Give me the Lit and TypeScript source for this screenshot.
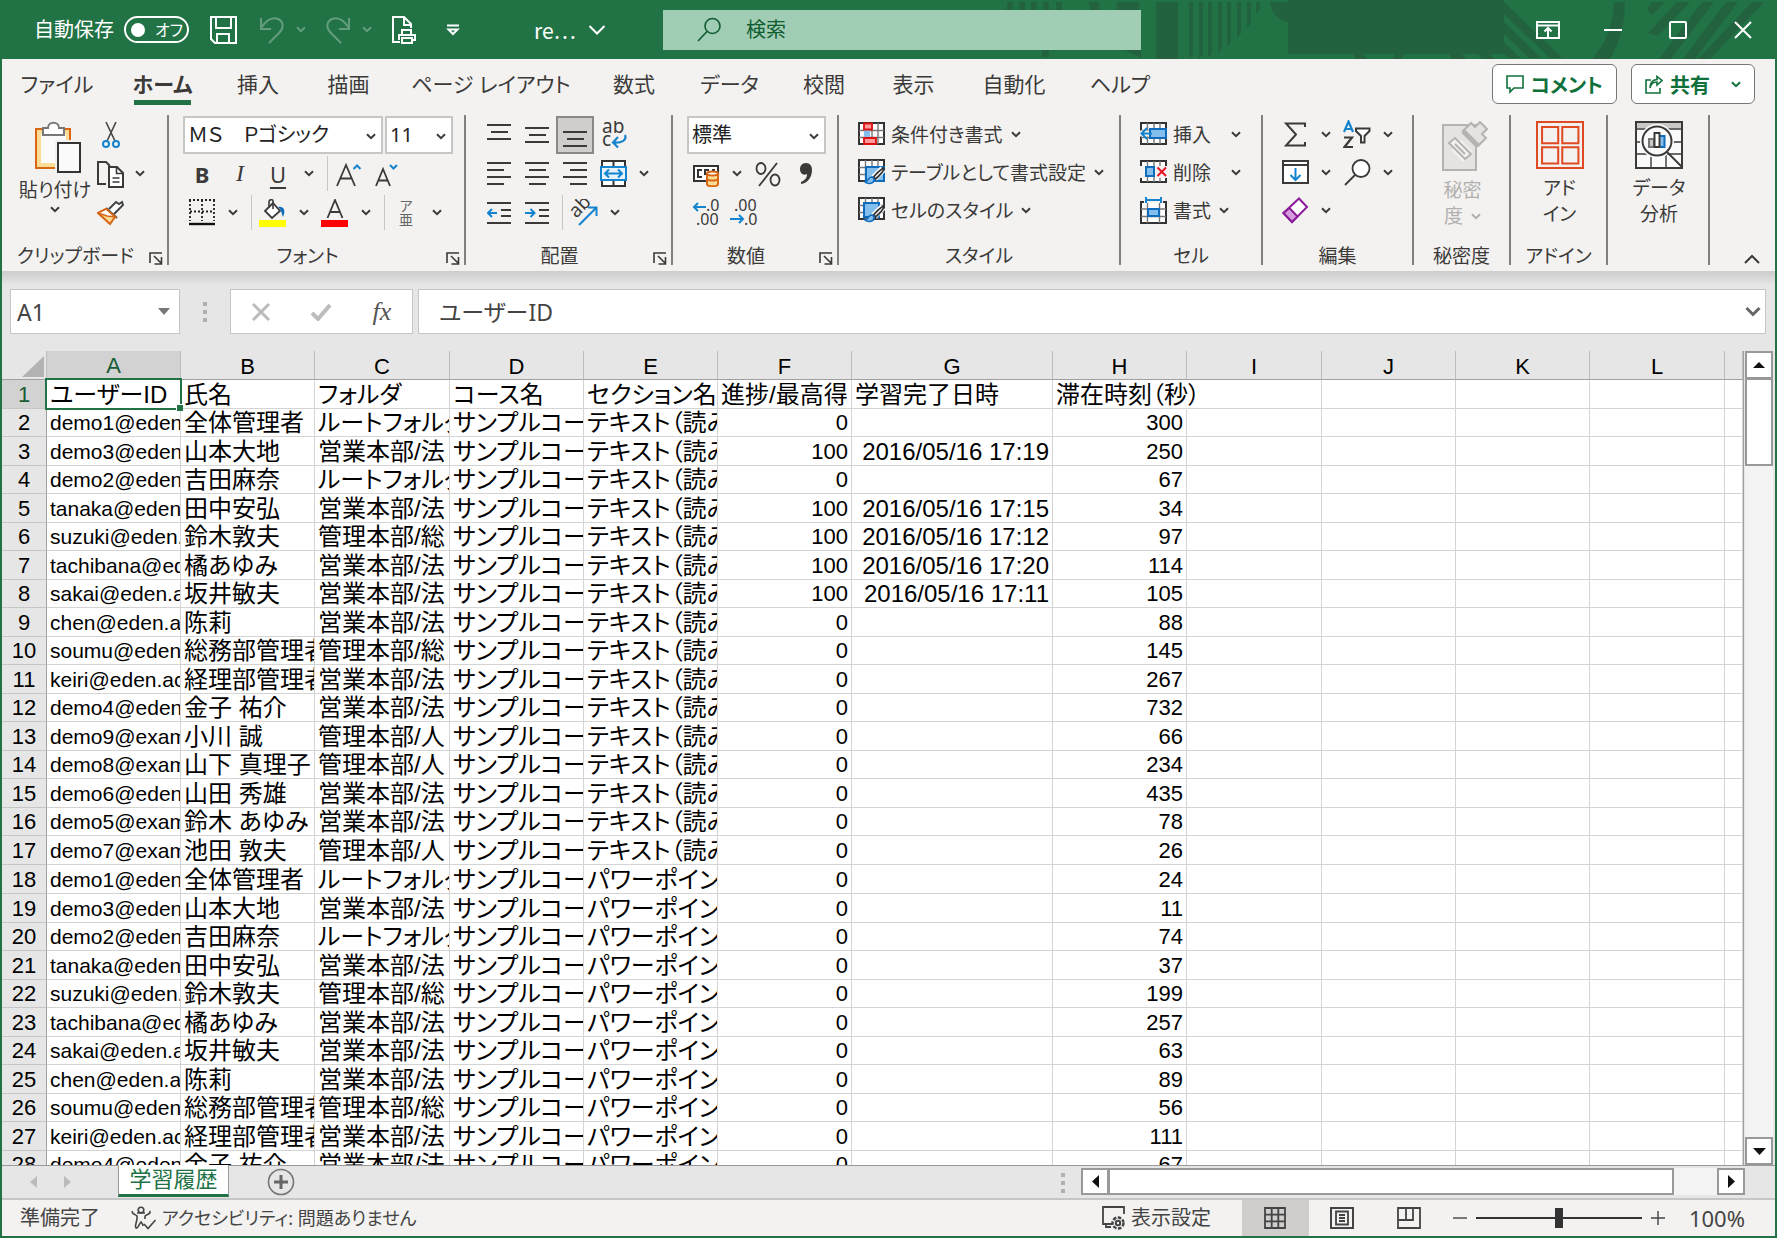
import { LitElement, html, css, svg, nothing, type TemplateResult, type SVGTemplateResult } from "lit";
import { customElement, state } from "lit/decorators.js";
import { classMap } from "lit/directives/class-map.js";

type Part = SVGTemplateResult;

const icon = (w: number, h: number, body: Part) => html`<svg
  width=${w} height=${h} viewBox="0 0 ${w} ${h}" fill="none" stroke="currentColor" stroke-width="2" aria-hidden="true"
>${body}</svg>`;

const chevron = icon(10, 7, svg`<path d="M1 1.2 5 5.2 9 1.2"/>`);
const lines = (rows: [number, number, number][]) =>
  icon(24, 24, svg`${rows.map(([x1, x2, y]) => svg`<path d="M${x1} ${y}H${x2}"/>`)}`);

const gridLines = svg`<path stroke="#777" stroke-width="1.4" d="M1 8.5H26M1 15.5H26M7.5 1V22M14 1V22M20 1V22"/>`;
const gridFrame = svg`<path fill="#fff" stroke="#333" d="M1 1H26V22H1Z"/>`;
const brush = svg`<path stroke="#fff" stroke-width="7" d="M25 10 16 19"/><path fill="#f3f2f1" stroke="#333" stroke-width="1.8" d="M25.500 9C22 11 18 15 15.500 18L17.500 20C21 17 25 13 26 10Z"/><path fill="#83beec" stroke="#0f6cbd" stroke-width="1.6" d="M7 23C10 23 10 18 14 18 17 19 17 24 12 24.500 10 24.600 8 24 7 23Z"/>`;

const I = {
  save: icon(28, 28, svg`<path d="M1 1H26V27H5L1 23ZM6 1V12H21V1M7 27V18H19V27"/>`),
  undo: icon(26, 28, svg`<path d="M2 2V13H12M2 12C8 3 14 1 19 3 25 6 25 12 20 17L10 27"/>`),
  redo: icon(26, 28, svg`<path d="M24 2V13H14M24 12C18 3 12 1 7 3 1 6 1 12 6 17L16 27"/>`),
  print: icon(26, 28, svg`<path d="M9 26H2V1H13L20 8V12M13 1V9H20M11 19V14H20V19M8 24V19H24V24H21M11 22H21V27H11Z"/>`),
  custom: icon(14, 12, svg`<path d="M1 1.500H13M2.500 5.500 7 10 11.500 5.500Z"/>`),
  bigChevron: icon(18, 12, svg`<path d="M1.500 2 9 9.500 16.500 2"/>`),
  search: icon(26, 26, svg`<circle cx="16.500" cy="9" r="7.500" stroke-width="1.600"/><path stroke-width="1.600" d="M11 14.500 2 24"/>`),
  ribbonOpt: icon(24, 18, svg`<path d="M1 1H23V17H1ZM1 4.500H23M12 16V7M8.500 10.500 12 7 15.500 10.500"/>`),
  min: icon(20, 18, svg`<path d="M1 9H19"/>`),
  max: icon(18, 18, svg`<rect x="1" y="1" width="16" height="16" rx="1"/>`),
  close: icon(18, 18, svg`<path d="M1 1 17 17M17 1 1 17"/>`),
  comment: icon(18, 19, svg`<path stroke-width="1.600" d="M1 1H17V13H8L4 17V13H1Z"/>`),
  share: icon(18, 19, svg`<path stroke-width="1.600" d="M6 5H1V18H15V13M5 13C6 8 9 7 12 7V10L17 5.500 12 1.500V4.500C7 5 5 8 5 13Z"/>`),
  paste: icon(56, 54, svg`<g transform="translate(6 0)"><path fill="#fbdc97" stroke="#d86613" d="M3 9H37V48H3Z"/><path fill="#fafafa" stroke="none" d="M8 14H33V43H8Z"/><path fill="#fff" stroke="#777" d="M10 15V8H15C15 1 26 1 26 8H31V15Z"/><path fill="#fff" stroke="#f3f2f1" stroke-width="6" d="M25 23H47V52H25Z"/><path fill="#fafafa" stroke="#333" d="M25 23H47V52H25Z"/></g>`),
  cut: icon(18, 28, svg`<path stroke="#444" stroke-width="1.600" d="M4 1 13 20M14 1 5 20"/><g stroke="#1583ce"><circle cx="4" cy="23" r="3"/><circle cx="14" cy="23" r="3"/></g>`),
  copy: icon(28, 28, svg`<path d="M9 24H1V2H9L13 6"/><path fill="#fff" d="M12 7H20L26 13V27H12Z"/><path stroke-width="1.600" d="M19.500 7V13.500H26M15.500 18H22.500M15.500 22H22.500"/>`),
  painter: icon(28, 26, svg`<path fill="#fff" stroke="#444" d="M12 9 19 2 22 4 25 2 26 5 17 14"/><path fill="#fff" stroke="#444" d="M9 8 20 18"/><path fill="#fbdc97" stroke="#d86613" d="M9 9 1 13 13 24 18 17Z"/><path fill="#fff" stroke="#d86613" stroke-width="1.600" d="M9 9 1 13 10 16 18 17Z"/>`),
  growFont: icon(28, 28, svg`<path stroke-width="1.800" d="M2 26 11 5 20 26M5 18.500H17"/><path stroke="#1583ce" d="M18.500 9 22 5.500 25.500 9"/>`),
  shrinkFont: icon(28, 28, svg`<path stroke-width="1.800" d="M3 26 10 9 17 26M5.500 20.500H14.500"/><path stroke="#1583ce" d="M17 5 20.500 8.500 24 5"/>`),
  borders: icon(26, 27, svg`<path stroke="#222" stroke-dasharray="2 2" stroke-width="1.800" d="M0 1H26M1 1V22M25 1V22M13 1V22M1 12.500H25"/><path stroke="#111" stroke-width="2.400" d="M0 25H26"/>`),
  fill: icon(28, 28, svg`<path fill="#fff" stroke-width="1.800" d="M6 12 14 4 21 12 13 19Z"/><path stroke-width="1.600" d="M14 10V2C14 0 10 0 10 3V8"/><path fill="#0f6cbd" stroke="none" d="M19 8C25 7 27 12 24 18 22 14 23 11 19 8Z"/><path fill="#ff0" stroke="none" d="M0 21H27V28H0Z"/>`),
  color: icon(28, 28, svg`<path stroke-width="1.800" d="M6.500 19 14 1 21.500 19M9 13H19"/><path fill="#f00" stroke="none" d="M0 21H27V28H0Z"/>`),
  top: lines([[0, 24, 2], [4, 21, 9], [0, 24, 16]]),
  middle: lines([[0, 24, 5], [4, 21, 12], [0, 24, 19]]),
  bottom: lines([[0, 24, 9], [4, 21, 16], [0, 24, 23]]),
  left: lines([[0, 24, 1], [0, 17, 8], [0, 24, 15], [0, 17, 22]]),
  center: lines([[0, 24, 1], [4, 21, 8], [0, 24, 15], [4, 21, 22]]),
  right: lines([[0, 24, 1], [7, 24, 8], [0, 24, 15], [7, 24, 22]]),
  wrap: icon(34, 28, svg`<g transform="translate(6 0)"><text class="glyph" x="0" y="12" font-size="19">ab</text><text class="glyph" x="0" y="25" font-size="19">c</text><path stroke="#1583ce" stroke-width="2.200" d="M23 14C25 19 20 22 12 21.500M16 16 11 21.500 16 26.500"/></g>`),
  merge: icon(27, 27, svg`<path fill="#fff" stroke="#333" d="M2 1H25V26H2ZM13.500 1V26"/><path fill="#e6f2fb" stroke="#1583ce" d="M1 7H26V20H1Z"/><path stroke="#1583ce" d="M5 13.500H22M9 9.500 5 13.500 9 17.500M18 9.500 22 13.500 18 17.500"/>`),
  outdent: icon(24, 24, svg`<path d="M0 2H24M14 9H24M14 15H24M0 22H24"/><path stroke="#1583ce" d="M1 12H10M5 8 1 12 5 16"/>`),
  indent: icon(24, 24, svg`<path d="M0 2H24M14 9H24M14 15H24M0 22H24"/><path stroke="#1583ce" d="M0 12H9M5.500 8 9.500 12 5.500 16"/>`),
  orient: icon(28, 28, svg`<text class="glyph" x="-1" y="0" font-size="19" transform="translate(7 19) rotate(-45)">ab</text><path stroke="#1583ce" d="M9 26 26 9M18 8.500H26.500V17"/>`),
  currency: icon(28, 26, svg`<path fill="#fff" stroke="#333" d="M2 5H26V20H2Z"/><path stroke="#333" d="M10 9H6V16H10M17 9H13V14M20 9H23"/><path fill="#fbdc97" stroke="#d86613" d="M15 13V23C15 26 26 26 26 23V13Z"/><ellipse cx="20.500" cy="12.500" rx="5.500" ry="2" fill="#fff" stroke="#d86613"/><path stroke="#d86613" d="M15 18C16 20 25 20 26 18"/>`),
  percent: icon(26, 26, svg`<path stroke-width="1.800" d="M22 2 4 25"/><ellipse cx="6" cy="7.500" rx="4.500" ry="5.500" stroke-width="1.800"/><ellipse cx="20" cy="19" rx="4.500" ry="5.500" stroke-width="1.800"/>`),
  comma: icon(14, 24, svg`<path fill="currentColor" stroke="none" d="M7 1C11 1 13 4 13 8 13 15 9 21 2 22V20C6 18 8 16 8 12 4 14 1 11 1 7 1 4 3 1 7 1Z"/>`),
  decInc: icon(28, 28, svg`<text class="glyph" x="14" y="12" font-size="16">.0</text><text class="glyph" x="4" y="26" font-size="16">.00</text><path stroke="#1583ce" d="M2 8H14M6 4 2 8 6 12"/>`),
  decDec: icon(28, 28, svg`<text class="glyph" x="4" y="12" font-size="16">.00</text><text class="glyph" x="14" y="26" font-size="16">.0</text><path stroke="#1583ce" d="M0 20H13M9 16 13 20 9 24"/>`),
  cond: icon(27, 24, svg`${gridFrame}${gridLines}<path fill="#83beec" stroke="none" d="M6 7H12V16H6Z"/><path fill="#ff9a9a" stroke="#d11" stroke-width="1.800" d="M6 1.500H14V7.500H6ZM6 16H18V22H6Z"/>`),
  table: icon(27, 26, svg`${gridFrame}${gridLines}<path fill="#83beec" stroke="#0f6cbd" d="M8 8H26V22H8Z"/>${brush}`),
  style: icon(27, 26, svg`${gridFrame}${gridLines}<path fill="#83beec" stroke="#0f6cbd" d="M6 6H21V20H6Z"/>${brush}`),
  insert: icon(27, 24, svg`${gridFrame}${gridLines}<path fill="#83beec" stroke="#0f6cbd" d="M10 7H26V16H10Z"/><path stroke="#f3f2f1" stroke-width="6" d="M0 11.500H9"/><path stroke="#1583ce" d="M2 11.500H12M7 6 1.500 11.500 7 17"/>`),
  remove: icon(27, 24, svg`${gridFrame}${gridLines}<path stroke="none" fill="#f3f2f1" d="M15 6H27V18H15ZM0 6H5V18H0Z"/><path fill="#83beec" stroke="#0f6cbd" d="M6 7H14V16H6Z"/><path stroke="#e81123" d="M17.500 7.500 26 16M26 7.500 17.500 16"/>`),
  format: icon(27, 27, svg`<path fill="#fff" stroke="#333" d="M1 5H26V26H1Z"/><path stroke="#777" stroke-width="1.400" d="M1 12H26M1 19.500H26M7.500 5V26M19.500 5V26"/><path fill="#83beec" stroke="#0f6cbd" d="M8 12H19V19H8Z"/><path stroke="#f3f2f1" stroke-width="6" d="M4 3H23"/><path stroke="#1583ce" d="M6 3H21M6 0V6M21 0V6"/>`),
  sum: icon(22, 25, svg`<path d="M21 5V1.500H2L12 12.500 2 23.500H21V20"/>`),
  fillDown: icon(27, 25, svg`<path fill="#fff" d="M1 1H26V23H1Z"/><path d="M1 5H26"/><path stroke="#1583ce" d="M13.500 8V20M8.500 15 13.500 20 18.500 15"/>`),
  eraser: icon(27, 27, svg`<path fill="#fff" stroke="#8a1c9a" d="M1.500 16 17 1.500 25 10 10 25Z"/><path fill="#d59ddc" stroke="#8a1c9a" d="M1.500 16 7.500 11 15.500 19.500 10 25Z"/>`),
  sort: icon(28, 29, svg`<path stroke="#1583ce" stroke-width="2.200" d="M1 12 5.500 1.500 10 12M2.500 9H8.500"/><path stroke-width="2.200" d="M1 17.500H9L1.500 27H10"/><path fill="#fff" d="M13 8.500H26.500V11L21.500 16V22.500H18V16L13 11Z"/>`),
  find: icon(27, 27, svg`<circle cx="17" cy="9.500" r="8.500" fill="#fff" stroke-width="1.800"/><path stroke-width="1.800" d="M11 16 1 26"/>`),
  sens: icon(50, 52, svg`<path fill="#e4e3e2" stroke="#b5b3b1" d="M5 4H38V49H5Z"/><path stroke="#f3f2f1" stroke-width="14" d="M18 24 30 36M30 8 45 22"/><path fill="#f3f2f1" stroke="#b5b3b1" d="M11 22 17 17 33 33 27 38Z"/><path stroke="#b5b3b1" d="M17 23 27 33"/><path fill="#e4e3e2" stroke="#b5b3b1" d="M25 10 33 2 37 6 42 1 49 8 44 13 48 17 40 25Z"/><path stroke="#b5b3b1" stroke-width="5" d="M25 10 40 25"/>`),
  addin: icon(48, 50, svg`<g stroke="#e04a22" fill="#f3f2f1"><path d="M1 1H47V47H1Z"/><path d="M6 6H22V22H6ZM26 6H42V22H26ZM6 26H22V42H6ZM26 26H42V42H26Z" transform="scale(1.010)"/></g>`),
  analyze: icon(48, 50, svg`<path fill="#fafafa" d="M1 1H47V47H1Z"/><path fill="#cac7c5" stroke="none" d="M2 2H46V7H2Z"/><path stroke-width="1.400" d="M1 8H47M1 21H47M1 33H47M16 33V47M31 33V47"/><circle cx="22" cy="20" r="15" fill="#fff" stroke="#fff" stroke-width="4"/><circle cx="22" cy="20" r="14.500" fill="#fafafa"/><path fill="#cac7c5" stroke="#777" d="M14 18H19V26H14Z"/><path fill="#83beec" stroke="#0f6cbd" d="M24 15H29.500V26H24Z"/><path fill="#fff" d="M19.500 12H24.500V26H19.500Z"/><path d="M32 31 47 46"/>`),
  launcher: icon(14, 13, svg`<path stroke-width="1.600" d="M1 11V1H13M5 4 12 11M12.500 5V12H5.500"/>`),
  collapse: icon(16, 10, svg`<path d="M1 9 8 2 15 9"/>`),
  cancel: icon(20, 20, svg`<path stroke="#bbb" stroke-width="3" d="M2 2 18 18M18 2 2 18"/>`),
  check: icon(22, 18, svg`<path stroke="#bbb" stroke-width="4" d="M2 10 8 16 20 2"/>`),
  expand: icon(16, 11, svg`<path stroke="#666" stroke-width="3" d="M1.500 2 8 8.500 14.500 2"/>`),
  plus: icon(28, 28, svg`<circle cx="14" cy="14" r="12.500" stroke="#777" stroke-width="1.600"/><path stroke="#666" stroke-width="3" d="M14 7V21M7 14H21"/>`),
  access: icon(26, 24, svg`<g stroke="#444" stroke-width="1.600"><circle cx="10" cy="4" r="2.800"/><path d="M1.500 5C0 8 6 9 6 10 7 14 3 20 5 22 7 23 8 18 10 16 11 17 12 18 12 20M18.500 5C21 8 14 9 14 10V13M6 7 14 7M13 18 17 22.500 24.500 14"/></g>`),
  display: icon(24, 25, svg`<path stroke-width="1.800" d="M10 18H1V1H22V8M4 18V21H9"/><circle cx="16" cy="17" r="5.500" fill="#f3f2f1" stroke-width="2.400" stroke-dasharray="3.500 1.500"/><circle cx="16" cy="17" r="2.200"/>`),
  normal: icon(22, 22, svg`<path stroke-width="1.800" d="M1 1H21V21H1ZM7.700 1V21M14.300 1V21M1 7.700H21M1 14.300H21"/>`),
  page: icon(24, 22, svg`<path d="M1 1H23V21H1Z"/><path stroke-width="1.800" d="M6 4.500H18V17.500H6ZM9 8H15M9 11H15M9 14H15"/>`),
  breaks: icon(24, 22, svg`<path d="M1 1H23V21H1ZM9 1V13M16 1V13H1" stroke-width="1.800"/>`),
};

const arrow = (d: string, w: number, h: number, color = "#111") => html`<svg width=${w} height=${h} viewBox="0 0 ${w} ${h}" aria-hidden="true"><path d=${d} fill=${color} /></svg>`;

const btn = (label: string, body: unknown, cls = "") =>
  html`<button class="tool ${cls}" type="button" aria-label=${label}>${body}</button>`;
const drop = (label: string) => html`<button class="drop" type="button" aria-label="${label}">${chevron}</button>`;
const wide = (body: unknown, text: string, cls = "") =>
  html`<button class="wide ${cls}" type="button">${body}<span>${text}</span>${chevron}</button>`;
const picker = (label: string, value: string, cls: string) => html`<span class="picker ${cls}">
  <select aria-label=${label}><option>${value}</option></select>${chevron}</span>`;
const sep = html`<span class="sep"></span>`;

const TABS = ["ファイル", "ホーム", "挿入", "描画", "ページ レイアウト", "数式", "データ", "校閲", "表示", "自動化", "ヘルプ"];
const COLS = ["A", "B", "C", "D", "E", "F", "G", "H", "I", "J", "K", "L"];

const ROOT = "ルートフォルダ";
const SALES = "営業本部/法";
const ADMIN = "管理本部/総";
const STAFF = "管理本部/人";
const USERS: [string, string, string][] = [
  ["demo1@eden", "全体管理者", ROOT],
  ["demo3@eden", "山本大地", SALES],
  ["demo2@eden", "吉田麻奈", ROOT],
  ["tanaka@eden", "田中安弘", SALES],
  ["suzuki@eden.", "鈴木敦夫", ADMIN],
  ["tachibana@ed", "橘あゆみ", SALES],
  ["sakai@eden.a", "坂井敏夫", SALES],
  ["chen@eden.a", "陈莉", SALES],
  ["soumu@eden", "総務部管理者", ADMIN],
  ["keiri@eden.ac", "経理部管理者", SALES],
  ["demo4@eden", "金子 祐介", SALES],
  ["demo9@exam", "小川 誠", STAFF],
  ["demo8@exam", "山下 真理子", STAFF],
  ["demo6@eden", "山田 秀雄", SALES],
  ["demo5@exam", "鈴木 あゆみ", SALES],
  ["demo7@exam", "池田 敦夫", STAFF],
];
const TIMES = [300, 250, 67, 34, 97, 114, 105, 88, 145, 267, 732, 66, 234, 435, 78, 26, 24, 11, 74, 37, 199, 257, 63, 89, 56, 111, 67];
const DONE: Record<number, string> = { 1: "17:19", 3: "17:15", 4: "17:12", 5: "17:20", 6: "17:11" };

@customElement("excel-titlebar")
export class ExcelTitlebar extends LitElement {
  static styles = css`
    :host { display: flex; align-items: center; position: relative; height: 59px; background: #217346; color: #fff; overflow: hidden; }
    .art { position: absolute; right: 0; top: 0; }
    button { all: unset; display: flex; align-items: center; justify-content: center; box-sizing: border-box; flex: none; }
    .left { display: flex; align-items: center; flex: 0 1 663px; box-sizing: border-box; position: relative; padding-left: 34px; }
    .auto { display: flex; align-items: center; gap: 10px; font-size: 20px; line-height: 24px; }
    .switch { width: 65px; height: 27px; border: 2px solid #fff; border-radius: 14px; justify-content: flex-start; gap: 10px; padding-left: 5px; font-size: 16px; }
    .knob { width: 14px; height: 14px; border-radius: 50%; background: #fff; flex: none; }
    .quick { display: flex; align-items: center; margin-left: 21px; }
    .quick .big { width: 28px; }
    .quick .first { margin-right: 20px; }
    .quick .small { width: 38px; justify-content: flex-start; padding-left: 10px; }
    .off { opacity: .3; }
    .more { width: 70px; }
    .name { gap: 12px; margin-left: 46px; font-size: 21px; font-family: "Noto Sans CJK JP", sans-serif; }
    .search { display: flex; align-items: center; gap: 24px; position: relative; flex: 0 1 478px; height: 40px; padding-left: 33px; box-sizing: border-box; background: #a0cdb4; color: #0e5c2f; }
    input { all: unset; flex: 1; min-width: 0; font-size: 20px; line-height: 24px; }
    input::placeholder { color: #0e5c2f; opacity: 1; }
    .win { display: flex; align-items: center; justify-content: flex-end; flex: 1; position: relative; padding-right: 2px; }
    .win button { width: 65px; height: 40px; }
  `;
  render() {
    const g = "#23623f";
    return html`
      <svg class="art" width="777" height="59" viewBox="0 0 777 59" fill=${g} aria-hidden="true">
        ${[7, 19, 31, 43, 56].map((x) => svg`<path d="M${x} 2h6v8h-6z"/>`)}
        <path d="M88 2h11v8h-8zM117 2h22v8h-22zM156 2h22v57h-22zM42 50h7v7h-7zM125 50h16v8z" />
        ${[[189, 57], [199, 57], [208, 56], [218, 51], [227, 45], [237, 36], [247, 26], [256, 12]].map(([x, y]) => svg`<path d="M${x} 2h4v${y - 5}l-4 5z"/>`)}
        <path d="M270 2H288V0H504V54H288V22Q272 19 270 2ZM504 2 562 58H550L504 14ZM504 22 541 58H529L504 34ZM504 42 520 58H508L504 54Z" />
        <path d="M353 54H363L368 59H356ZM395 54H405L401 59H392ZM449 54H462L466 59H452ZM478 54H490L494 59H482Z" />
        <path d="M614 2H625Q625 34 610 59H592Q613 35 614 2Z" />
        <path d="M647 9 652 2H665L652 15ZM648 33 677 2H690L658 36ZM659 59 702 2H714L671 59ZM683 59 726 2H738L695 59ZM698 59 752 2H764L710 59Z" />
      </svg>
      <div class="left">
        <div class="auto"><span>自動保存</span>
          <button class="switch" role="switch" aria-checked="false" aria-label="自動保存"><span class="knob"></span>オフ</button></div>
        <div class="quick">
          <button class="big first" aria-label="上書き保存">${I.save}</button>
          <button class="big off" aria-label="元に戻す">${I.undo}</button><button class="small off" aria-label="元に戻す一覧">${chevron}</button>
          <button class="big off" aria-label="やり直し">${I.redo}</button><button class="small off" aria-label="やり直し一覧">${chevron}</button>
          <button class="big" aria-label="印刷">${I.print}</button>
          <button class="more" aria-label="カスタマイズ">${I.custom}</button>
        </div>
        <button class="name">re… ${I.bigChevron}</button>
      </div>
      <label class="search">${I.search}<input type="text" placeholder="検索" aria-label="検索" /></label>
      <div class="win">
        <button aria-label="リボンの表示">${I.ribbonOpt}</button><button aria-label="最小化">${I.min}</button>
        <button aria-label="最大化">${I.max}</button><button aria-label="閉じる">${I.close}</button>
      </div>`;
  }
}

@customElement("excel-ribbon")
export class ExcelRibbon extends LitElement {
  @state() private active = 1;
  static styles = css`
    :host { display: block; background: #f3f2f1; color: #3b3a39; font-size: 19px; border-bottom: 2px solid #d0cecc; }
    button { all: unset; box-sizing: border-box; display: flex; align-items: center; justify-content: center; flex: none; }
    svg { flex: none; }
    .glyph { fill: currentColor; stroke: none; font-family: "Noto Sans", sans-serif; }
    .head { display: flex; justify-content: space-between; height: 56px; padding-right: 20px; align-items: flex-start; }
    .tabs { display: grid; grid-template-columns: 110px 101px 90px 91px 194px 92px 99px 90px 89px 112px 100px; font-size: 21px; line-height: 28px; }
    .tab { height: 46px; padding-bottom: 6px; padding-top: 10px; position: relative; white-space: nowrap; }
    .tab.on { font-weight: 700; }
    .tab.on::after { content: ""; position: absolute; left: 22px; right: 22px; bottom: 0; height: 5px; background: #217346; }
    .acts { display: flex; gap: 14px; padding-top: 5px; }
    .act { height: 40px; padding: 0 13px; gap: 7px; border: 1px solid #777; border-radius: 6px; background: #fff; color: #0f703b; font-weight: 700; font-size: 20px; white-space: nowrap; }
    .act span { margin-right: 14px; }
    .act.plain span { margin-right: 0; }
    .body { display: grid; grid-template-columns: 167px 297px 207px 166px 282px 142px 151px 97px 97px 102px 1fr; height: 156px; }
    .group { display: flex; flex-direction: column; box-sizing: border-box; height: 150px; border-right: 2px solid #808080; }
    .area { flex: 1; }
    .row { display: flex; align-items: center; height: 39px; }
    .tight .row { height: 38px; }
    .foot { display: flex; align-items: center; line-height: 18px; height: 18px; white-space: nowrap; }
    .foot span { flex: 1; text-align: center; }
    .foot .go { width: 14px; height: 18px; margin-right: 4px; align-items: flex-end; }
    .tool { width: 38px; height: 38px; }
    .tool.pressed { background: #d0cecd; border: 2px solid #8a8886; }
    .drop { width: 24px; height: 38px; }
    .sep { width: 1px; height: 35px; margin: 0 2px 0 6px; background: #c8c6c4; }
    .clip { display: grid; grid-template-columns: 78px 1fr; padding-left: 14px; }
    .paste { flex-direction: column; justify-content: flex-start; gap: 3px; padding-top: 5px; line-height: 26px; white-space: nowrap; }
    .clip .tool { width: 34px; }
    .font, .align, .num { padding-left: 14px; }
    .styles, .cells { padding-left: 19px; }
    .edit { padding-left: 13px; }
    .picker { display: flex; position: relative; height: 38px; margin-right: 2px; }
    .picker select { appearance: none; flex: 1; min-width: 0; border: 2px solid #c8c6c4; border-radius: 0; background: #fff; color: #222; padding: 0 3px; font: inherit; font-size: 20px; }
    .picker svg { position: absolute; right: 7px; top: 17px; pointer-events: none; }
    .face { width: 200px; }
    .size { width: 68px; }
    .kind { width: 139px; }
    .wide { gap: 6px; height: 32px; white-space: nowrap; justify-content: flex-start; }
    .wide span { margin-right: 2px; }
    .wide.spread span { margin-right: 14px; }
    .bold { font-weight: 700; font-size: 22px; }
    .ital { font-style: italic; font-size: 24px; font-family: "Liberation Serif", serif; }
    .under { text-decoration: underline; text-underline-offset: 4px; font-size: 22px; }
    .ruby { flex-direction: column; font-size: 14px; line-height: 14px; color: #666; }
    .big { flex-direction: column; justify-content: flex-start; width: 100%; line-height: 26px; padding: 6px 0 0 2px; gap: 4px; text-align: center; }
    .big.dim { color: #b1afad; }
    .big .ln { display: flex; align-items: center; justify-content: center; gap: 8px; }
    .end { display: flex; align-items: flex-end; justify-content: flex-end; padding: 0 15px 7px 0; }
  `;
  private group(cls: string, title: string, launch: boolean, body: unknown) {
    return html`<section class="group"><div class="area ${cls}">${body}</div>
      <div class="foot"><span>${title}</span>${launch ? html`<button class="go" aria-label="${title}の設定">${I.launcher}</button>` : nothing}</div></section>`;
  }
  private big(body: unknown, lines: (string | TemplateResult)[], cls = "") {
    return html`<button class="big ${cls}">${body}<span>${lines.map((l) => html`<span class="ln">${l}</span>`)}</span></button>`;
  }
  render() {
    return html`
      <div class="head">
        <nav class="tabs" role="tablist">
          ${TABS.map((t, i) => html`<button class=${classMap({ tab: true, on: i === this.active })} role="tab"
            aria-selected=${i === this.active} @click=${() => (this.active = i)}>${t}</button>`)}
        </nav>
        <div class="acts">
          <button class="act plain">${I.comment}<span>コメント</span></button>
          <button class="act">${I.share}<span>共有</span>${chevron}</button>
        </div>
      </div>
      <div class="body">
        ${this.group("clip", "クリップボード", true, html`
          <button class="paste">${I.paste}<span>貼り付け</span>${chevron}</button>
          <div>
            <div class="row">${btn("切り取り", I.cut)}</div>
            <div class="row">${btn("コピー", I.copy)}${drop("コピー一覧")}</div>
            <div class="row">${btn("書式のコピー", I.painter)}</div>
          </div>`)}
        ${this.group("font", "フォント", true, html`
          <div class="row">${picker("フォント", "ＭＳ　Ｐゴシック", "face")}${picker("サイズ", "11", "size")}</div>
          <div class="row">${btn("太字", "B", "bold")}${btn("斜体", "I", "ital")}${btn("下線", "U", "under")}${drop("下線一覧")}${sep}${btn("拡大", I.growFont)}${btn("縮小", I.shrinkFont)}</div>
          <div class="row">${btn("罫線", I.borders)}${drop("罫線一覧")}${sep}${btn("塗りつぶし", I.fill)}${drop("塗り一覧")}${btn("文字色", I.color)}${drop("文字色一覧")}${sep}${btn("ふりがな", html`<span>ア</span><span>亜</span>`, "ruby")}${drop("ふりがな一覧")}</div>`)}
        ${this.group("align", "配置", true, html`
          <div class="row">${btn("上揃え", I.top)}${btn("上下中央", I.middle)}${btn("下揃え", I.bottom, "pressed")}${btn("折り返し", I.wrap)}</div>
          <div class="row">${btn("左揃え", I.left)}${btn("中央揃え", I.center)}${btn("右揃え", I.right)}${btn("結合", I.merge)}${drop("結合一覧")}</div>
          <div class="row">${btn("インデント減", I.outdent)}${btn("インデント増", I.indent)}${sep}${btn("方向", I.orient)}${drop("方向一覧")}</div>`)}
        ${this.group("num", "数値", true, html`
          <div class="row">${picker("表示形式", "標準", "kind")}</div>
          <div class="row">${btn("通貨", I.currency)}${drop("通貨一覧")}${btn("パーセント", I.percent)}${btn("桁区切り", I.comma)}</div>
          <div class="row">${btn("小数点を増やす", I.decInc)}${btn("小数点を減らす", I.decDec)}</div>`)}
        ${this.group("styles tight", "スタイル", false, html`
          <div class="row">${wide(I.cond, "条件付き書式")}</div>
          <div class="row">${wide(I.table, "テーブルとして書式設定")}</div>
          <div class="row">${wide(I.style, "セルのスタイル")}</div>`)}
        ${this.group("cells tight", "セル", false, html`
          <div class="row">${wide(I.insert, "挿入", "spread")}</div>
          <div class="row">${wide(I.remove, "削除", "spread")}</div>
          <div class="row">${wide(I.format, "書式")}</div>`)}
        ${this.group("edit tight", "編集", false, html`
          <div class="row">${btn("合計", I.sum)}${drop("合計一覧")}${btn("並べ替え", I.sort)}${drop("並べ替え一覧")}</div>
          <div class="row">${btn("フィル", I.fillDown)}${drop("フィル一覧")}${btn("検索", I.find)}${drop("検索一覧")}</div>
          <div class="row">${btn("クリア", I.eraser)}${drop("クリア一覧")}</div>`)}
        ${this.group("", "秘密度", false, this.big(I.sens, ["秘密", html`度 ${chevron}`], "dim"))}
        ${this.group("", "アドイン", false, this.big(I.addin, ["アド", "イン"]))}
        ${this.group("", "", false, this.big(I.analyze, ["データ", "分析"]))}
        <div class="end"><button aria-label="リボンを折りたたむ">${I.collapse}</button></div>
      </div>`;
  }
}

@customElement("excel-formula")
export class ExcelFormula extends LitElement {
  static styles = css`
    :host { display: flex; align-items: flex-start; box-sizing: border-box; height: 78px; padding: 16px 9px 0 8px; color: #444; background: linear-gradient(#cfcfcf, #e6e6e6 12px); }
    .box { display: flex; align-items: center; box-sizing: border-box; height: 45px; background: #fff; border: 1px solid #c6c6c6; }
    .name { width: 170px; padding: 0 9px 0 6px; }
    input { all: unset; flex: 1; min-width: 0; font-size: 23px; line-height: 30px; }
    .dots { display: grid; gap: 4px; width: 50px; justify-content: center; align-self: flex-start; padding-top: 13px; }
    .dots i { width: 4px; height: 4px; background: #b0b0b0; }
    .tools { width: 183px; margin-right: 5px; }
    button { all: unset; flex: 1; display: flex; justify-content: center; align-items: center; }
    .fx { font: italic 26px/30px "Liberation Serif", serif; color: #555; }
    .text { flex: 1; padding: 0 4px 0 20px; }
    .text button { flex: none; }
  `;
  render() {
    return html`
      <div class="box name"><input aria-label="名前ボックス" value="A1" />${arrow("M0 0H12L6 7Z", 12, 7, "#777")}</div>
      <div class="dots"><i></i><i></i><i></i></div>
      <div class="box tools"><button aria-label="キャンセル">${I.cancel}</button><button aria-label="入力">${I.check}</button><button class="fx" aria-label="関数の挿入">fx</button></div>
      <div class="box text"><input aria-label="数式バー" value="ユーザーID" /><button aria-label="展開">${I.expand}</button></div>`;
  }
}

@customElement("excel-grid")
export class ExcelGrid extends LitElement {
  static styles = css`
    :host { display: grid; grid-template-columns: minmax(0, 1fr) 31px; min-height: 0; overflow: hidden; background: #e6e6e6; color: #000; font-family: "Liberation Sans", "Noto Sans CJK JP", sans-serif; font-feature-settings: "palt"; }
    .view { overflow: hidden; background: #fff; border-right: 1px solid #a0a0a0; min-height: 0; }
    table { width: 100%; table-layout: fixed; border-collapse: separate; border-spacing: 0; font-size: 24px; line-height: 26px; }
    .c-row { width: 45px; }
    .c-n { width: 134px; }
    .c-w { width: 135px; }
    .c-date { width: 201px; }
    th, td { box-sizing: border-box; padding: 1px 0 0; font-weight: 400; height: 28px; border-right: 1px solid #d4d4d4; border-bottom: 1px solid #d4d4d4; white-space: nowrap; overflow: hidden; }
    .r:nth-child(odd) td, .r:nth-child(odd) th, .r:nth-child(18) td { height: 29px; }
    thead th { background: #e6e6e6; border-color: #a0a0a0; font-size: 22px; line-height: 24px; padding-top: 3px; border-right-color: #bdbdbd; }
    thead .sel { background: #d2d2d2; color: #1a5c36; border-bottom: 2px solid #217346; }
    .corner svg { display: block; margin: 0 0 0 20px; }
    .r th { background: #e6e6e6; font-size: 22px; border-right-color: #a0a0a0; border-bottom-color: #c6c6c6; }
    .r .sel { background: #d2d2d2; color: #1a5c36; }
    td { padding-left: 3px; }
    .id { font-size: 21px; padding-left: 3px; }
    .num { text-align: right; padding-right: 3px; font-size: 22px; }
    .date { text-align: right; padding-right: 3px; }
    .spill { overflow: visible; border-right-color: transparent; }
    .cur { position: relative; overflow: visible; font-size: 24px; }
    .cur::before { content: ""; position: absolute; inset: -2px; border: 2px solid #217346; }
    .cur::after { content: ""; position: absolute; right: -3px; bottom: -3px; width: 6px; height: 6px; background: #217346; border: solid #fff; border-width: 1px 0 0 1px; }
    .bar { display: flex; flex-direction: column; width: 28px; margin-left: 1px; background: #f3f3f3; }
    button { all: unset; box-sizing: border-box; display: flex; align-items: center; justify-content: center; height: 28px; background: #fff; border: 2px solid #999; }
    .thumb { height: 88px; box-sizing: border-box; background: #fff; border: 2px solid #999; margin-top: -1px; }
    .track { flex: 1; }
  `;
  render() {
    return html`
      <div class="view"><table>
        <colgroup><col class="c-row" />${["n", "n", "w", "n", "n", "n", "date", "n", "w", "n", "n", "w"].map((c) => html`<col class="c-${c}" />`)}<col /></colgroup>
        <thead><tr><th class="corner" aria-label="すべて選択">${arrow("M22 0V21H0Z", 22, 21, "#b3b3b3")}</th>
          ${COLS.map((c, i) => html`<th scope="col" class=${i === 0 ? "sel" : ""}>${c}</th>`)}<th></th></tr></thead>
        <tbody>
          <tr class="r"><th scope="row" class="sel">1</th><td class="id cur">ユーザーID</td><td>氏名</td><td>フォルダ</td><td>コース名</td><td>セクション名</td><td>進捗/最高得</td><td>学習完了日時</td><td class="spill">滞在時刻（秒）</td><td></td><td></td><td></td><td></td><td></td></tr>
          ${TIMES.map((t, i) => {
            const [id, name, folder] = USERS[i % 16];
            return html`<tr class="r"><th scope="row">${i + 2}</th><td class="id">${id}</td><td>${name}</td><td>${folder}</td><td>サンプルコー</td>
              <td>${i < 16 ? "テキスト（読み" : "パワーポイン"}</td><td class="num">${DONE[i] ? 100 : 0}</td>
              <td class="date">${DONE[i] ? `2016/05/16 ${DONE[i]}` : ""}</td><td class="num">${t}</td><td></td><td></td><td></td><td></td><td></td></tr>`;
          })}
        </tbody></table></div>
      <div class="bar"><button aria-label="上へ">${arrow("M6 0 12 6H0Z", 12, 6)}</button><div class="thumb"></div><div class="track"></div>
        <button aria-label="下へ">${arrow("M0 0H13L6.500 7Z", 13, 7)}</button></div>`;
  }
}

@customElement("excel-footer")
export class ExcelFooter extends LitElement {
  static styles = css`
    :host { display: block; color: #444; }
    button { all: unset; box-sizing: border-box; display: flex; align-items: center; justify-content: center; flex: none; }
    .sheets { display: flex; align-items: flex-start; box-sizing: border-box; height: 35px; background: #e6e6e6; border-top: 1px solid #999; border-bottom: 2px solid #c6c6c6; padding-right: 30px; }
    .nav { display: flex; gap: 27px; padding: 10px 47px 0 28px; }
    .tab { height: 32px; width: 111px; margin-top: -1px; background: #fff; border: 1px solid #999; border-top: 0; border-bottom: 3px solid #217346; color: #217346; font-size: 22px; line-height: 26px; padding-bottom: 3px; }
    .add { width: 28px; height: 28px; margin: 2px auto 0 38px; }
    .dots { display: grid; gap: 4px; padding: 7px 16px 0 0; }
    .dots i { width: 4px; height: 4px; background: #b0b0b0; }
    .scroll { display: flex; flex: 0 1 664px; height: 27px; margin-top: 2px; background: #f3f3f3; }
    .scroll button { width: 28px; background: #fff; border: 2px solid #999; }
    .thumb { flex: 0 1 566px; box-sizing: border-box; background: #fff; border: 2px solid #999; margin: 0 auto 0 -1px; }
    .status { display: flex; align-items: center; height: 36px; padding: 0 30px 0 18px; background: #f3f2f1; font-size: 20px; line-height: 26px; white-space: nowrap; }
    .acc { display: flex; align-items: center; gap: 5px; margin: 0 auto 0 31px; font-size: 18px; }
    .set { gap: 5px; margin-right: 31px; }
    .mode { width: 67px; height: 36px; }
    .mode.on { background: #d0cecd; }
    .zoom { display: flex; align-items: center; gap: 9px; margin: 0 24px 0 10px; }
    .pct { font-size: 22px; }
    input { appearance: none; width: 166px; height: 20px; margin: 0; background: linear-gradient(#333, #333) center / 100% 2px no-repeat; }
    input::-webkit-slider-thumb { appearance: none; width: 8px; height: 20px; background: #333; }
  `;
  render() {
    return html`
      <div class="sheets">
        <div class="nav">${arrow("M7 0V12L0 6Z", 7, 12, "#bbb")}${arrow("M0 0V12L7 6Z", 7, 12, "#bbb")}</div>
        <button class="tab">学習履歴</button><button class="add" aria-label="新しいシート">${I.plus}</button>
        <div class="dots"><i></i><i></i><i></i></div>
        <div class="scroll"><button aria-label="左へ">${arrow("M7 0V13L0 6.500Z", 7, 13)}</button><div class="thumb"></div><button aria-label="右へ">${arrow("M0 0V13L7 6.500Z", 7, 13)}</button></div>
      </div>
      <div class="status">
        <span>準備完了</span><span class="acc">${I.access}<span>アクセシビリティ: 問題ありません</span></span>
        <button class="set">${I.display}表示設定</button>
        <button class="mode on" aria-label="標準">${I.normal}</button><button class="mode" aria-label="ページ レイアウト">${I.page}</button><button class="mode" aria-label="改ページ">${I.breaks}</button>
        <div class="zoom"><button aria-label="縮小">${icon(14, 14, svg`<path stroke-width="1.400" d="M0 7H14"/>`)}</button><input type="range" min="0" max="100" value="50" aria-label="ズーム" /><button aria-label="拡大">${icon(14, 14, svg`<path stroke-width="1.400" d="M0 7H14M7 0V14"/>`)}</button></div>
        <span class="pct">100%</span>
      </div>`;
  }
}

@customElement("app-root")
export class AppRoot extends LitElement {
  static styles = css`
    :host { display: flex; flex-direction: column; height: 100vh; box-sizing: border-box; overflow: hidden; background: #217346; font-family: "Noto Sans", "Noto Sans CJK JP", sans-serif; font-feature-settings: "palt"; }
    .frame { display: flex; flex-direction: column; flex: 1; min-height: 0; margin: 0 2px 2px; }
    .sheet { flex: 1; }
  `;
  render() {
    return html`<excel-titlebar></excel-titlebar>
      <div class="frame"><excel-ribbon></excel-ribbon><excel-formula></excel-formula><excel-grid class="sheet"></excel-grid><excel-footer></excel-footer></div>`;
  }
}
